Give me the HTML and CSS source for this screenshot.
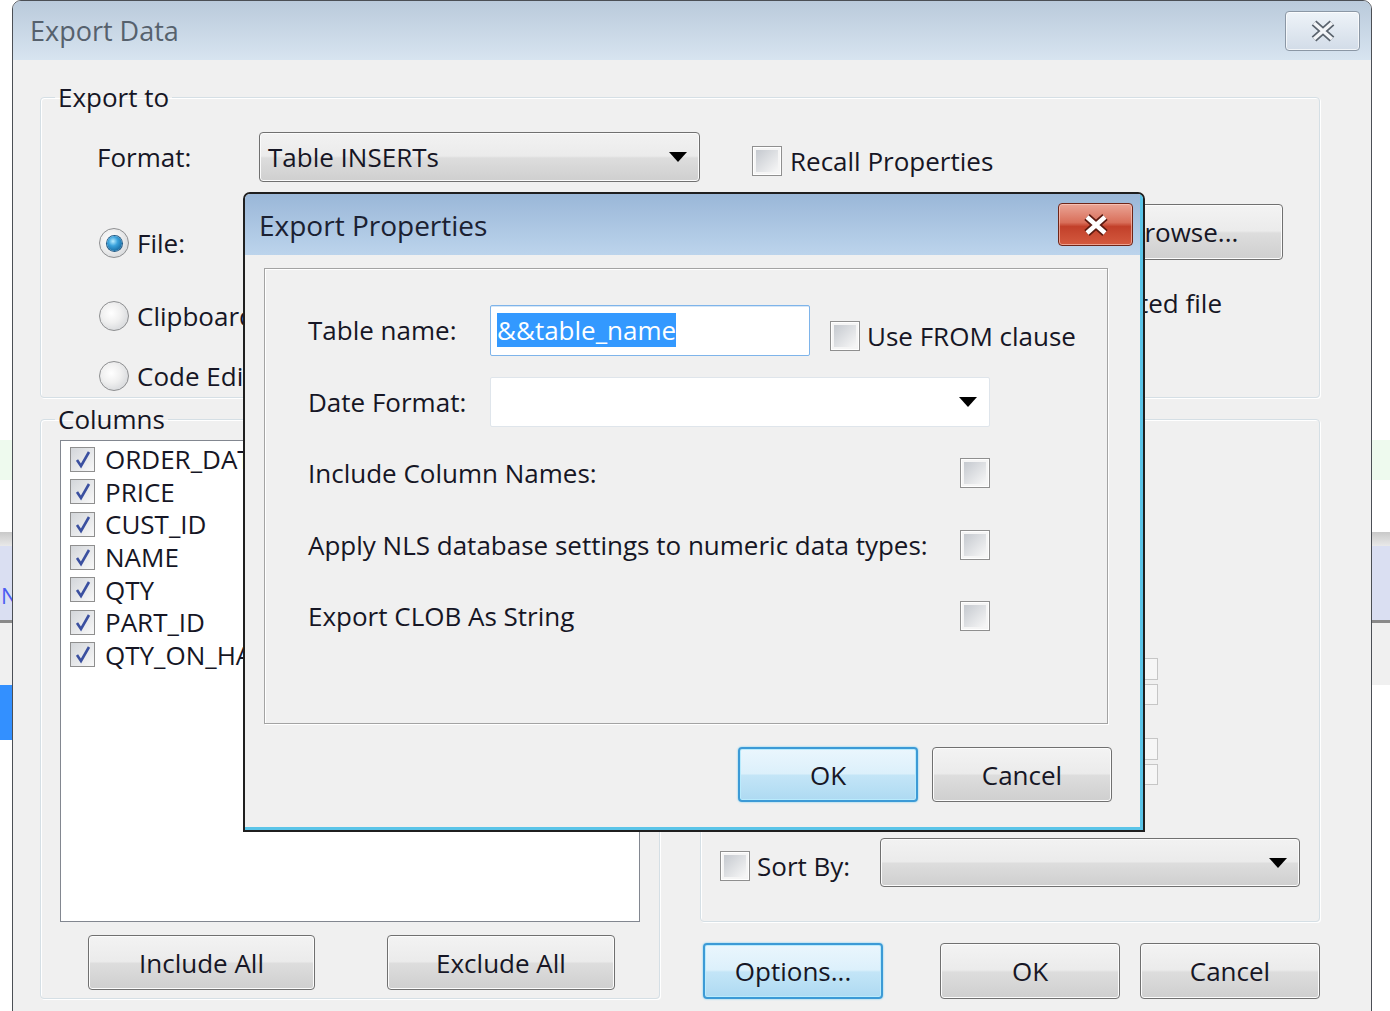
FILE: index.html
```html
<!DOCTYPE html>
<html lang="en">

<head>
    <meta charset="UTF-8">
    <meta name="viewport" content="width=device-width, initial-scale=1.0">
    <title>Export Data</title>
    <link rel="stylesheet" href="styles.css">
</head>

<body>
    <!-- Desktop behind the dialogs -->
    <div class="backdrop">
        <div class="band band-top"></div>
        <div class="band band-green"></div>
        <div class="band band-plain"></div>
        <div class="band band-rule"></div>
        <div class="band band-lavender"><span class="band-letter">N</span></div>
        <div class="band band-line"></div>
        <div class="band band-grey"></div>
        <div class="band band-blue"></div>
    </div>

    <!-- Main dialog -->
    <div class="window main-window">
        <div class="main-titlebar">
            <span class="main-title">Export Data</span>
            <button type="button" class="close-btn">
                <svg width="28" height="22" viewBox="0 0 28 22">
                    <path d="M5 3 L23 19 M23 3 L5 19" stroke="#5b646e" stroke-width="7" />
                    <path d="M5 3 L23 19 M23 3 L5 19" stroke="#f3f5f8" stroke-width="3.5" />
                </svg>
            </button>
        </div>

        <div class="main-body">
            <fieldset class="group export-group">
                <legend>Export to</legend>

                <div class="export-row format-row">
                    <span class="field-label">Format:</span>
                    <div class="combo combo-raised">
                        <span>Table INSERTs</span>
                        <svg class="arrow" width="18" height="10" viewBox="0 0 18 10"><path d="M0 0H18L9 10Z" /></svg>
                    </div>
                    <label class="check recall-check"><span class="checkbox"></span>Recall Properties</label>
                </div>

                <div class="export-row file-row">
                    <label class="radio-item"><span class="radio selected"></span>File:</label>
                    <div class="text-field file-field"></div>
                    <button type="button" class="btn browse-btn">Browse...</button>
                </div>

                <div class="export-row clip-row">
                    <label class="radio-item"><span class="radio"></span>Clipboard</label>
                    <label class="check open-check"><span class="checkbox"></span>Open exported file</label>
                </div>

                <div class="export-row editor-row">
                    <label class="radio-item"><span class="radio"></span>Code Editor</label>
                </div>
            </fieldset>

            <div class="lower">
                <fieldset class="group columns-group">
                    <legend>Columns</legend>
                    <div class="column-list">
                        <div class="list-item"><span class="mini-check"><svg width="23" height="23" viewBox="0 0 23 23"><path d="M6 12 L10 18 L18 4" /></svg></span>ORDER_DATE</div>
                        <div class="list-item"><span class="mini-check"><svg width="23" height="23" viewBox="0 0 23 23"><path d="M6 12 L10 18 L18 4" /></svg></span>PRICE</div>
                        <div class="list-item"><span class="mini-check"><svg width="23" height="23" viewBox="0 0 23 23"><path d="M6 12 L10 18 L18 4" /></svg></span>CUST_ID</div>
                        <div class="list-item"><span class="mini-check"><svg width="23" height="23" viewBox="0 0 23 23"><path d="M6 12 L10 18 L18 4" /></svg></span>NAME</div>
                        <div class="list-item"><span class="mini-check"><svg width="23" height="23" viewBox="0 0 23 23"><path d="M6 12 L10 18 L18 4" /></svg></span>QTY</div>
                        <div class="list-item"><span class="mini-check"><svg width="23" height="23" viewBox="0 0 23 23"><path d="M6 12 L10 18 L18 4" /></svg></span>PART_ID</div>
                        <div class="list-item"><span class="mini-check"><svg width="23" height="23" viewBox="0 0 23 23"><path d="M6 12 L10 18 L18 4" /></svg></span>QTY_ON_HAND</div>
                    </div>
                    <div class="list-buttons">
                        <button type="button" class="btn include-btn">Include All</button>
                        <button type="button" class="btn exclude-btn">Exclude All</button>
                    </div>
                </fieldset>

                <div class="right-col">
                    <fieldset class="group filter-group">
                        <div class="mover">
                            <span class="mover-box"></span>
                            <span class="mover-box short"></span>
                            <span class="mover-box spaced"></span>
                            <span class="mover-box short"></span>
                        </div>
                        <div class="sort-row">
                            <label class="check"><span class="checkbox"></span>Sort By:</label>
                            <div class="combo combo-raised sort-combo">
                                <span></span>
                                <svg class="arrow" width="18" height="10" viewBox="0 0 18 10"><path d="M0 0H18L9 10Z" /></svg>
                            </div>
                        </div>
                    </fieldset>

                    <div class="dialog-buttons">
                        <button type="button" class="btn btn-default options-btn">Options...</button>
                        <button type="button" class="btn ok-btn">OK</button>
                        <button type="button" class="btn cancel-btn">Cancel</button>
                    </div>
                </div>
            </div>
        </div>
    </div>

    <!-- Export Properties modal -->
    <div class="window modal">
        <div class="modal-frame">
            <div class="modal-titlebar">
                <span class="modal-title">Export Properties</span>
                <button type="button" class="close-btn close-red">
                    <svg width="30" height="24" viewBox="0 0 30 24">
                        <path d="M6 4 L24 20 M24 4 L6 20" stroke="#5c1a10" stroke-width="8" />
                        <path d="M6 4 L24 20 M24 4 L6 20" stroke="#ffffff" stroke-width="4.5" />
                    </svg>
                </button>
            </div>

            <div class="modal-body">
                <div class="props-panel">
                    <span class="prop-label">Table name:</span>
                    <div class="table-name-cell">
                        <div class="text-field name-field"><span class="selected-text">&amp;&amp;table_name</span></div>
                        <label class="check from-check"><span class="checkbox"></span>Use FROM clause</label>
                    </div>

                    <span class="prop-label">Date Format:</span>
                    <div class="combo combo-flat date-combo">
                        <span></span>
                        <svg class="arrow" width="18" height="10" viewBox="0 0 18 10"><path d="M0 0H18L9 10Z" /></svg>
                    </div>

                    <span class="prop-label wide">Include Column Names:</span>
                    <span class="checkbox prop-check"></span>

                    <span class="prop-label wide">Apply NLS database settings to numeric data types:</span>
                    <span class="checkbox prop-check"></span>

                    <span class="prop-label wide">Export CLOB As String</span>
                    <span class="checkbox prop-check"></span>
                </div>

                <div class="modal-buttons">
                    <button type="button" class="btn btn-default">OK</button>
                    <button type="button" class="btn">Cancel</button>
                </div>
            </div>
        </div>
    </div>
</body>

</html>
```

FILE: styles.css
```css
* {
    box-sizing: border-box;
}

html, body {
    margin: 0;
    height: 1011px;
    overflow: hidden;
}

body {
    position: relative;
    background: #ffffff;
    font-family: "Open Sans", "Noto Sans", sans-serif;
    font-size: 26px;
    line-height: 34px;
    color: #161625;
}

/* Desktop bands visible at the edges */
.band {
    height: 40px;
}

.band-top { height: 440px; background: #ffffff; }
.band-green { height: 40px; background: #eefaee; }
.band-plain { height: 52px; background: #ffffff; }
.band-rule { height: 14px; background: linear-gradient(#c9c9c9, #e9e9e9); }
.band-lavender { height: 74px; background: #dadff2; overflow: hidden; }
.band-line { height: 3px; background: #8a8a8a; }
.band-grey { height: 62px; background: #f0f0f0; }
.band-blue { height: 55px; background: linear-gradient(to right, #3390ff 0, #3390ff 12px, #ffffff 12px); }

.band-letter {
    display: block;
    margin: 34px 0 0 1px;
    font-size: 22px;
    line-height: 30px;
    color: #4b5cf2;
}

/* Windows */
.window {
    position: absolute;
}

.main-window {
    left: 12px;
    top: 0;
    width: 1360px;
    height: 1040px;
    border: 1px solid #4b4f55;
    border-radius: 9px 9px 0 0;
    background: #f0f0f0;
    overflow: hidden;
}

.main-titlebar {
    height: 59px;
    display: flex;
    align-items: center;
    justify-content: space-between;
    padding: 0 11px 0 17px;
    background: linear-gradient(#bacadb, #d7e4f0);
}

.main-title {
    font-size: 27px;
    color: #56616d;
}

.close-btn {
    width: 75px;
    height: 40px;
    padding: 0;
    display: flex;
    align-items: center;
    justify-content: center;
    border: 1px solid #8b97a5;
    border-radius: 4px;
    background: linear-gradient(#eef3f8, #d2dce8);
    box-shadow: inset 0 0 0 1px rgba(255, 255, 255, 0.7);
}

.main-body {
    padding: 20px 0 0 27px;
}

/* Group boxes */
.group {
    margin: 0;
    border: 1px solid #d5dfe5;
    border-radius: 4px;
    box-shadow: inset 1px 1px 0 #ffffff, 1px 1px 0 #ffffff;
}

.group legend {
    padding: 0 3px;
    line-height: 34px;
}

.export-group {
    width: 1280px;
    padding: 0 0 6px 14px;
}

.export-row {
    display: flex;
    margin-left: 42px;
}

.format-row {
    margin-top: 18px;
    height: 50px;
    align-items: center;
}

.file-row {
    margin-top: 22px;
    height: 56px;
    align-items: center;
}

.clip-row {
    margin-top: 26px;
    height: 60px;
    align-items: center;
}

.editor-row {
    margin-top: 15px;
    height: 30px;
    align-items: center;
}

.field-label {
    width: 162px;
}

.radio-item {
    display: flex;
    align-items: center;
    gap: 8px;
    width: 160px;
    margin-left: 2px;
    white-space: nowrap;
}

.file-row .radio-item {
    align-self: flex-end;
}

.radio {
    flex: none;
    width: 30px;
    height: 30px;
    border-radius: 50%;
    border: 1px solid #8e8f91;
    background: radial-gradient(circle at 40% 40%, #ffffff 0, #f0f0f0 40%, #c9ccd0 100%);
    display: flex;
    align-items: center;
    justify-content: center;
}

.radio.selected::after {
    content: "";
    width: 15px;
    height: 15px;
    border-radius: 50%;
    background: radial-gradient(circle at 40% 35%, #b8ecff 0, #3aa2dc 35%, #0d5b92 90%);
    box-shadow: 0 0 0 1px #245b86;
}

.check {
    display: flex;
    align-items: center;
    gap: 8px;
    white-space: nowrap;
}

.checkbox {
    flex: none;
    display: block;
    width: 30px;
    height: 30px;
    border: 1px solid #8f8f8f;
    padding: 3px;
    background: linear-gradient(135deg, #c5c9cf, #f7f7f7) content-box, #f5f5f5;
    box-shadow: inset 0 0 0 1px #ffffff;
}

.recall-check {
    margin-left: 52px;
    margin-top: 8px;
}

.open-check {
    margin-left: auto;
    margin-right: 97px;
    align-self: flex-start;
}

/* Combos, fields, buttons */
.combo {
    display: flex;
    align-items: center;
    justify-content: space-between;
    padding: 0 12px 0 8px;
}

.combo-raised {
    width: 441px;
    height: 50px;
    border: 1px solid #707070;
    border-radius: 4px;
    background: linear-gradient(#f2f2f2 0%, #ebebeb 48%, #dddddd 52%, #cfcfcf 100%);
    box-shadow: inset 0 0 0 1px #fbfbfb;
}

.combo-flat {
    height: 50px;
    border: 1px solid #dfe5eb;
    border-radius: 2px;
    background: #ffffff;
}

.arrow {
    flex: none;
    fill: #000000;
}

.text-field {
    height: 51px;
    border: 1px solid #abadb3;
    border-radius: 2px;
    background: #ffffff;
}

.file-field {
    width: 809px;
    height: 50px;
}

.btn {
    height: 56px;
    padding: 0;
    border: 1px solid #707070;
    border-radius: 4px;
    background: linear-gradient(#f3f3f3 0%, #ebebeb 48%, #dddddd 52%, #cfcfcf 100%);
    box-shadow: inset 0 0 0 1px #fcfcfc;
    font: inherit;
    color: inherit;
}

.btn-default {
    border: 2px solid #3c9ad6;
    background: linear-gradient(#eaf6fd 0%, #dcf0fb 48%, #c3e5f7 52%, #aedaf2 100%);
    box-shadow: inset 0 0 0 1px #b9ebfd, 0 0 2px #5ec8f2;
}

.browse-btn {
    width: 200px;
    margin-left: 15px;
}

/* Lower part of the main dialog */
.lower {
    display: grid;
    grid-template-columns: 620px 620px;
    column-gap: 40px;
    margin-top: 4px;
}

.columns-group {
    padding: 0 0 8px 14px;
}

.column-list {
    width: 580px;
    height: 482px;
    margin: 4px 0 0 5px;
    padding: 2px 0 0 9px;
    border: 1px solid #828790;
    background: #ffffff;
    overflow: hidden;
}

.list-item {
    display: flex;
    align-items: center;
    gap: 10px;
    height: 32.6px;
    white-space: nowrap;
}

.mini-check {
    flex: none;
    width: 25px;
    height: 25px;
    border: 1px solid #8f8f8f;
    background: linear-gradient(135deg, #d3d6da, #f8f8f8);
    display: flex;
    align-items: center;
    justify-content: center;
}

.mini-check path {
    fill: none;
    stroke: #3b50a0;
    stroke-width: 2.6;
}

.list-buttons {
    display: flex;
    margin-top: 13px;
}

.list-buttons .btn {
    height: 55px;
}

.include-btn {
    width: 227px;
    margin-left: 33px;
}

.exclude-btn {
    width: 228px;
    margin-left: 72px;
}

.right-col {
    padding-top: 17px;
}

.filter-group {
    padding: 0 19px 34px 19px;
}

.mover {
    display: flex;
    flex-direction: column;
    gap: 4px;
    width: 28px;
    margin: 238px 0 0 410px;
}

.mover-box {
    display: block;
    height: 22px;
    border: 1px solid #c6c6c6;
    background: #f6f6f6;
}

.mover-box.short {
    height: 21px;
}

.mover-box.spaced {
    margin-top: 29px;
}

.sort-row {
    display: flex;
    align-items: center;
    height: 49px;
    margin-top: 53px;
}

.sort-row .check {
    gap: 7px;
    margin-top: 6px;
}

.sort-combo {
    width: 420px;
    height: 49px;
    margin-left: auto;
}

.dialog-buttons {
    display: flex;
    margin-top: 21px;
}

.dialog-buttons .btn {
    width: 180px;
}

.options-btn {
    margin-left: 3px;
}

.ok-btn {
    margin-left: 57px;
}

.cancel-btn {
    margin-left: 20px;
}

/* Export Properties modal */
.modal {
    left: 243px;
    top: 192px;
    width: 902px;
    height: 640px;
    border: 2px solid #1f1f1f;
    border-radius: 7px 7px 0 0;
    background: #f0f0f0;
    overflow: hidden;
}

.modal-frame {
    height: 100%;
    border-right: 3px solid #5ac4e8;
    border-bottom: 3px solid #5ac4e8;
}

.modal-titlebar {
    height: 61px;
    display: flex;
    align-items: center;
    justify-content: space-between;
    padding: 0 7px 0 14px;
    background: linear-gradient(#9ab7d8, #bcd4ec);
}

.modal-title {
    font-size: 28px;
    color: #1b2132;
}

.close-red {
    height: 43px;
    border-color: #6e2518;
    background: linear-gradient(#eaa596 0%, #d96f5a 45%, #c2402a 55%, #d45a3f 100%);
    box-shadow: inset 0 0 0 1px rgba(255, 210, 200, 0.6);
}

.modal-body {
    padding: 13px 28px 0 19px;
}

.props-panel {
    width: 844px;
    height: 456px;
    border: 1px solid #a3a3a3;
    box-shadow: 1px 1px 0 #ffffff, inset 1px 1px 0 #ffffff;
    padding: 25px 0 0 43px;
    display: grid;
    grid-template-columns: 182px 470px 30px 1fr;
    grid-template-rows: 72px 72px 70px 73px 70px;
    align-items: center;
}

.prop-label {
    grid-column: 1;
    white-space: nowrap;
}

.prop-label.wide {
    grid-column: 1 / 3;
}

.table-name-cell {
    grid-column: 2 / 5;
    display: flex;
    align-items: center;
}

.name-field {
    width: 320px;
    padding: 7px 0 0 6px;
    border-color: #7eb4ea;
    box-shadow: inset 0 1px 0 #d6e6f6;
}

.selected-text {
    display: inline-block;
    background: #3399ff;
    color: #ffffff;
    line-height: 34px;
}

.from-check {
    margin-left: 20px;
    margin-top: 11px;
    gap: 7px;
}

.date-combo {
    grid-column: 2 / 4;
}

.prop-check {
    grid-column: 3;
}

.modal-buttons {
    display: flex;
    justify-content: flex-end;
    gap: 14px;
    margin-top: 23px;
}

.modal-buttons .btn {
    width: 180px;
    height: 55px;
}
```
